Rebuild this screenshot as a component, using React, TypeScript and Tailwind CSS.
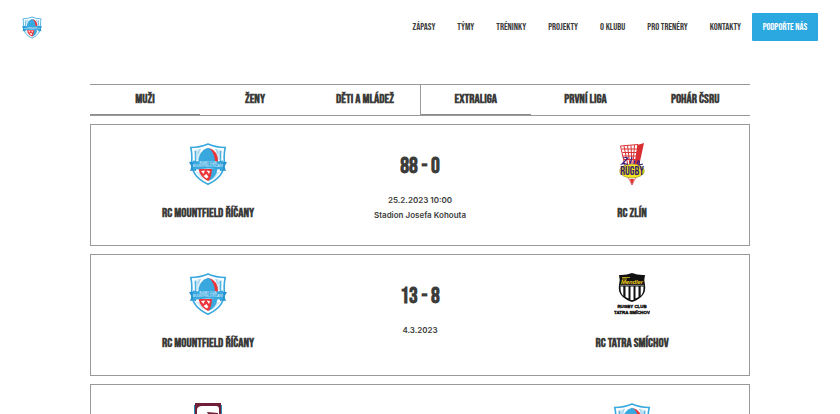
import type { ReactNode } from "react";

const display = "font-['Bebas_Neue','Roboto_Condensed','Liberation_Sans',sans-serif]";

function RicanyLogo({ className }: { className: string }) {
  return (
    <svg viewBox="0 0 38 42" className={className} role="img" aria-label="RC Mountfield Říčany">
      <path d="M1.800 4.500Q11 4.500 19 1Q27 4.500 36.200 4.500Q34.500 12 35.500 20Q35 34 19 41.200Q3 34 2.500 20Q3.500 12 1.800 4.500Z" fill="#fff" stroke="#38a8df" strokeWidth="1.600" />
      <path d="M5 7l6-1v11H6zM27 6l6 1-1 10h-5zM6 28l8 3v6zM32 28l-8 3v6z" fill="#cfe9f7" />
      <path d="M6.500 8v11M31.500 8v11" stroke="#4db1e2" strokeWidth="1.400" />
      <path d="M11.500 6l-3 5M26.500 6l3 5" stroke="#9dd3ef" strokeWidth="1.200" />
      <path d="M9 20Q10 7 19 4.800Q28 7 29 20Z" fill="#38a8df" />
      <path d="M20 5Q29.500 8 29 19L26 18Q25.500 10 20 5Z" fill="#ed3438" />
      <path d="M9.500 26h18Q26.500 34 19 38Q11 34 9.500 26Z" fill="#ed3438" />
      <path d="M23 26h5.500Q27.500 34 20 38Q23 32 23 26Z" fill="#38a8df" />
      <path d="M12 28l4-.5-1.500 3.500zM17.500 27.500l3.500.5-1 3zM14.500 33l3-2 2 3-2 1.500z" fill="#fff" />
      <path d="M0 19Q4 19 7 17.500V28Q4 27 1 28L2.500 23.500ZM38 19Q34 19 31 17.500V28Q34 27 37 28L35.500 23.500Z" fill="#2593cf" />
      <path d="M4 17.500Q19 20.500 34 17.500V27Q19 24 4 27Z" fill="#38a8df" />
      <text x="19" y="21.200" fontSize="2.600" textAnchor="middle" fill="#fff" fontFamily="Liberation Sans, sans-serif">RUGBY CLUB</text>
      <text x="19" y="24.300" fontSize="2.900" textAnchor="middle" fill="#e3f3fb" fontFamily="Liberation Sans, sans-serif">MOUNTFIELD ŘÍČANY</text>
    </svg>
  );
}

function ZlinLogo() {
  return (
    <svg viewBox="0 0 26 42" className="h-[42px] w-[26px]" role="img" aria-label="RC Zlín">
      <path d="M1.500 3L19 1.500L16 23H6Z" fill="#fff" stroke="#df3032" />
      <path d="M18.500 2L25 0L20 23H15.500Z" fill="#d92d30" />
      <path d="M5 3l4 20M8.500 2.500l2.500 20M12 2.500l1 20M15.500 2l-1.500 20M3 6h15M3.500 9.500h14M4 13h14M5 16.500h12" stroke="#dc3436" strokeWidth="1" />
      <path d="M9 34h8l-4 8z" fill="#fff" stroke="#e04446" strokeWidth=".8" />
      <path d="M11 36h4l-2 6z" fill="#d92d30" />
      <ellipse cx="13" cy="28" rx="12.400" ry="7" fill="#f4e51e" stroke="#8f8b4a" strokeWidth=".6" />
      <text x="13" y="32.300" fontSize="12" textAnchor="middle" fontFamily="Bebas Neue, Liberation Sans, sans-serif" fill="#34206e">RUGBY</text>
      <path d="M4 15q3-1 5 0l-6 6q4-1 6 1M13 14l-2 7M16 17l-1 4M18 21l1-3q2-1 1 4l4-1" stroke="#362383" strokeWidth="1.200" fill="none" />
    </svg>
  );
}

function TatraLogo() {
  return (
    <svg viewBox="0 0 36 42" className="h-[42px] w-9" role="img" aria-label="RC Tatra Smíchov">
      <path d="M5 2Q12 2.500 18 0Q24 2.500 31 2Q29.500 7 31 12Q33 24 18 29Q3 24 5 12Q6.500 7 5 2Z" fill="#111" />
      <path d="M6.500 13.500h2.800v9.500q-3-3-2.800-9.500zM11.500 13.500h3v12l-3-1.500zM16.500 13.500h3v13.500h-3zM21.500 13.500h3v10.500l-3 1.500zM26.700 13.500h2.800q.2 6.500-2.800 9.500z" fill="#fff" />
      <path d="M8 4.500h8M8 6h5" stroke="#e6c820" strokeWidth=".8" />
      <text x="18" y="10.800" fontSize="5.800" textAnchor="middle" fontFamily="Liberation Sans, sans-serif" fontStyle="italic" fontWeight="700" fill="#f3cf1c">Mendler</text>
      <path d="M6 12.300h24" stroke="#fff" strokeWidth=".5" />
      <text x="18" y="34.500" fontSize="4.400" textAnchor="middle" fontFamily="Liberation Sans, sans-serif" fontWeight="700" fill="#111" stroke="#111" strokeWidth=".4">RUGBY CLUB</text>
      <text x="18" y="41" fontSize="4.400" textAnchor="middle" fontFamily="Liberation Sans, sans-serif" fontWeight="700" fill="#111" stroke="#111" strokeWidth=".4">TATRA SMÍCHOV</text>
    </svg>
  );
}

function MaroonLogo() {
  return (
    <svg viewBox="0 0 30 42" className="h-[42px] w-[30px]" role="img" aria-label="RC Sparta Praha">
      <path d="M1 2h28v30L15 42 1 32z" fill="#258fb8" />
      <path d="M2 0h26v31L15 40 2 31z" fill="#6d2038" />
      <path d="M4 12V6Q5 3 9 3h14q3 0 3 3v17L15 35 4 26z" fill="#fff" />
      <path d="M14 9l11 1v1.500l-10-.5z" fill="#6d2038" />
    </svg>
  );
}

type Match = {
  home: string;
  homeLogo: ReactNode;
  away: string;
  awayLogo: ReactNode;
  score: string;
  date: string;
  place?: string;
};

const ricany = <RicanyLogo className="h-[42px] w-[38px]" />;

const matches: Match[] = [
  { home: "RC Mountfield Říčany", homeLogo: ricany, away: "RC Zlín", awayLogo: <ZlinLogo />, score: "88 - 0", date: "25.2.2023 10:00", place: "Stadion Josefa Kohouta" },
  { home: "RC Mountfield Říčany", homeLogo: ricany, away: "RC Tatra Smíchov", awayLogo: <TatraLogo />, score: "13 - 8", date: "4.3.2023" },
  { home: "RC Sparta Praha", homeLogo: <MaroonLogo />, away: "RC Mountfield Říčany", awayLogo: ricany, score: "10 - 24", date: "11.3.2023" },
];

const links = ["Zápasy", "Týmy", "Tréninky", "Projekty", "O klubu", "Pro trenéry", "Kontakty"];

function Team({ name, logo }: { name: string; logo: ReactNode }) {
  return (
    <div className="flex flex-col items-center">
      {logo}
      <h3 className={`${display} mt-4 text-[13px] leading-6 font-bold whitespace-nowrap uppercase`}>{name}</h3>
    </div>
  );
}

function Tabs({ label, items }: { label: string; items: string[] }) {
  return (
    <div role="tablist" aria-label={label} className="grid grid-cols-3 not-first:border-l not-first:border-[#999]">
      {items.map((item, i) => (
        <button
          key={item}
          role="tab"
          aria-selected={i === 0}
          className={`${display} h-[30px] border-b border-transparent text-[13px] font-bold whitespace-nowrap uppercase aria-selected:border-[#8c8c8c]`}
        >
          {item}
        </button>
      ))}
    </div>
  );
}

export default function App() {
  return (
    <div className="bg-white text-[#3c3c3b]">
      <header className="flex items-center justify-between px-[22px] py-[13px]">
        <a href="#" aria-label="RC Mountfield Říčany">
          <RicanyLogo className="h-[23px] w-5" />
        </a>
        <nav className={`${display} flex items-center gap-[22px] text-[10px] uppercase`}>
          {links.map((link) => (
            <a key={link} href="#" className="whitespace-nowrap">{link}</a>
          ))}
          <a href="#" className="-ml-[11px] flex h-7 w-[66px] items-center justify-center rounded-[1px] bg-[#2ba8e0] whitespace-nowrap text-white">Podpořte nás</a>
        </nav>
      </header>
      <main className="mx-auto mt-[30px] w-full max-w-[660px]">
        <div className="grid grid-cols-2 border-y border-[#999]">
          <Tabs label="Kategorie" items={["Muži", "Ženy", "Děti a mládež"]} />
          <Tabs label="Soutěž" items={["Extraliga", "První liga", "Pohár ČSRU"]} />
        </div>
        <div className="mt-2 flex flex-col gap-2">
          {matches.map((match) => (
            <article key={match.date} className="grid grid-cols-3 border border-[#999] px-[11px] pt-[18px] pb-5">
              <Team name={match.home} logo={match.homeLogo} />
              <div className="flex flex-col items-center">
                <p className={`${display} mt-1.5 mb-2 text-[22px] leading-9 font-bold`}>{match.score}</p>
                <p className="font-['Inter',sans-serif] text-[8px] leading-[15px] font-semibold">{match.date}</p>
                {match.place && <p className="font-['Inter',sans-serif] text-[8px] leading-[15px] font-semibold">{match.place}</p>}
              </div>
              <Team name={match.away} logo={match.awayLogo} />
            </article>
          ))}
        </div>
      </main>
    </div>
  );
}
